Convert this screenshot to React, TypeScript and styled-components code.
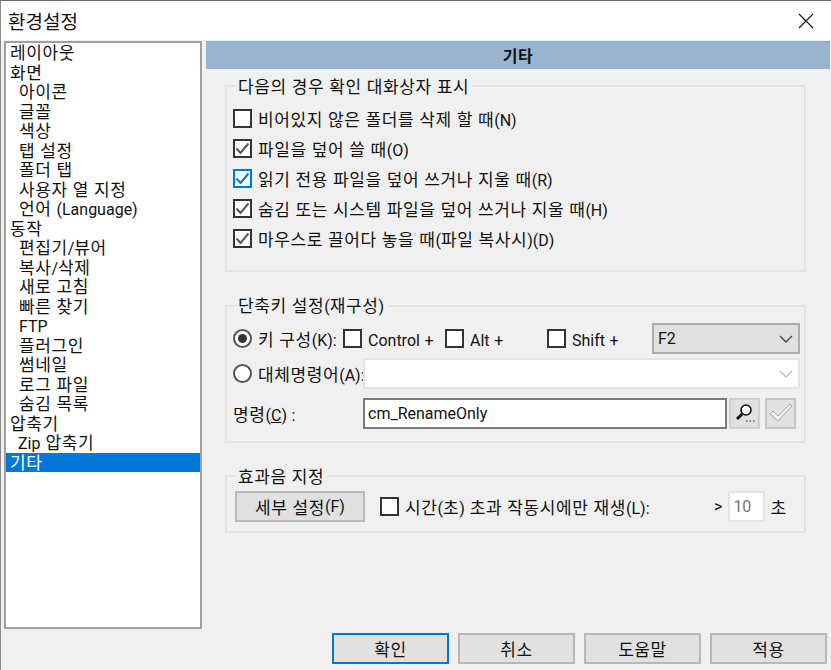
import styled, { createGlobalStyle } from "styled-components";

const GlobalStyle = createGlobalStyle`
  html, body {
    margin: 0;
    padding: 0;
    background: #f0f0f0;
  }
  * {
    box-sizing: border-box;
  }
`;

const Window = styled.div`
  width: 831px;
  height: 670px;
  overflow: hidden;
  display: flex;
  flex-direction: column;
  background: #f0f0f0;
  border-top: 1px solid #6b6b6b;
  border-left: 1px solid #8a8a8a;
  font-family: "Noto Sans CJK KR", sans-serif;
  font-size: 17px;
  color: #111;
  letter-spacing: 0.6px;
  word-spacing: 0.6px;
`;

const Latin = styled.span`
  font-family: Roboto, sans-serif;
  font-size: 16px;
  letter-spacing: 0;
`;

const Underlined = styled(Latin)`
  text-decoration: underline;
`;

// hangul and latin are set at different sizes, like the bitmap-hinted system font
function Txt({ children }: { children: string }) {
  const parts = children.split(/([\uac00-\ud7af ]+)/).filter(Boolean);
  return (
    <>
      {parts.map((part, i) =>
        /[\uac00-\ud7af]/.test(part) ? part : <Latin key={i}>{part}</Latin>
      )}
    </>
  );
}

const TitleBar = styled.div`
  height: 39px;
  flex: none;
  background: #fff;
  display: flex;
  align-items: center;
  justify-content: space-between;
  padding: 0 17px 0 7px;
`;

const Title = styled.div`
  font-size: 19px;
  letter-spacing: 0;
`;

const Body = styled.div`
  flex: none;
  height: 590px;
  display: flex;
  padding: 1px 0 0 3px;
  gap: 4px;
`;

const List = styled.div`
  width: 198px;
  height: 588px;
  flex: none;
  background: #fff;
  border: 2px solid #a0a0a0;
  display: flex;
  flex-direction: column;
`;

const ListItem = styled.div<{ $indent?: number; $selected?: boolean }>`
  height: 19.52px;
  line-height: 18px;
  padding-left: ${({ $indent }) => $indent ?? 4}px;
  background: ${({ $selected }) => ($selected ? "#0078d7" : "transparent")};
  color: ${({ $selected }) => ($selected ? "#fff" : "#111")};
  white-space: nowrap;
`;

const Panel = styled.div`
  width: 624px;
  flex: none;
  display: flex;
  flex-direction: column;
`;

const PanelHeader = styled.div`
  height: 28px;
  flex: none;
  background: #9ab3cf;
  border-top: 1px solid #8fa8c4;
  text-align: center;
  line-height: 27px;
  font-size: 16px;
  font-weight: 700;
  margin-bottom: 7px;
`;

const Group = styled.fieldset<{ $height: number; $gapBelow: number }>`
  margin: 0 24px ${({ $gapBelow }) => $gapBelow}px 19px;
  height: ${({ $height }) => $height}px;
  min-width: 0;
  flex: none;
  padding: 0 0 0 6px;
  border: 2px solid #e3e3e3;
`;

const GroupTitle = styled.legend`
  margin-left: 2px;
  padding: 0 3px;
  line-height: 20px;
  white-space: nowrap;
`;

const CheckList = styled.div`
  display: flex;
  flex-direction: column;
  gap: 8px;
  padding-top: 11px;
`;

const Row = styled.div`
  height: 22px;
  display: flex;
  align-items: center;
  white-space: nowrap;
`;

const CheckBoxFrame = styled.span<{ $accent?: boolean }>`
  width: 19px;
  height: 19px;
  flex: none;
  display: inline-flex;
  align-items: center;
  justify-content: center;
  background: #fff;
  border: 2px solid ${({ $accent }) => ($accent ? "#0078d7" : "#333")};
  margin-right: 6px;
`;

function CheckBox({ checked, accent }: { checked?: boolean; accent?: boolean }) {
  return (
    <CheckBoxFrame $accent={accent}>
      {checked && (
        <svg width="15" height="15" viewBox="0 0 15 15">
          <path
            d="M1.5 7.5 L5.5 12 L13.5 2.5"
            fill="none"
            stroke={accent ? "#0078d7" : "#555"}
            strokeWidth="2"
          />
        </svg>
      )}
    </CheckBoxFrame>
  );
}

const RadioFrame = styled.span`
  width: 19px;
  height: 19px;
  flex: none;
  border-radius: 50%;
  border: 2px solid #555;
  background: #fff;
  margin-right: 6px;
  display: inline-flex;
  align-items: center;
  justify-content: center;
`;

const RadioDot = styled.span`
  width: 9px;
  height: 9px;
  border-radius: 50%;
  background: #333;
`;

const ShortcutRows = styled.div`
  display: flex;
  flex-direction: column;
  padding-top: 5px;
`;

const ShortcutRow = styled.div<{ $height: number }>`
  height: ${({ $height }) => $height}px;
  display: flex;
  align-items: center;
  white-space: nowrap;
`;

const FixedLabel = styled.span<{ $width: number }>`
  width: ${({ $width }) => $width}px;
  flex: none;
  display: inline-block;
`;

const KeySelect = styled.div`
  width: 148px;
  height: 31px;
  flex: none;
  background: #e1e1e1;
  border: 2px solid #adadad;
  display: flex;
  align-items: center;
  justify-content: space-between;
  padding: 0 5px 0 4px;
`;

const Combo = styled.div`
  width: 437px;
  height: 31px;
  flex: none;
  background: #fff;
  border: 2px solid #e3e3e3;
  display: flex;
  align-items: center;
  justify-content: flex-end;
  padding-right: 5px;
`;

const CommandInput = styled.div`
  width: 364px;
  height: 31px;
  flex: none;
  background: #fff;
  border: 2px solid #7a7a7a;
  display: flex;
  align-items: center;
  padding-left: 3px;
`;

const IconButton = styled.div<{ $disabled?: boolean }>`
  width: 31px;
  height: 31px;
  flex: none;
  margin-left: ${({ $disabled }) => ($disabled ? 5 : 2)}px;
  background: #e1e1e1;
  border: 2px solid ${({ $disabled }) => ($disabled ? "#c4c4c4" : "#d0d0d0")};
  display: flex;
  align-items: center;
  justify-content: center;
`;

const SoundRow = styled.div`
  display: flex;
  align-items: center;
  height: 31px;
  margin: 5px 0 0 2px;
  white-space: nowrap;
`;

const PushButton = styled.div<{ $width: number; $primary?: boolean }>`
  width: ${({ $width }) => $width}px;
  height: 31px;
  flex: none;
  background: #e1e1e1;
  border: 2px solid ${({ $primary }) => ($primary ? "#0078d7" : "#b8b8b8")};
  display: flex;
  align-items: center;
  justify-content: center;
  white-space: nowrap;
`;

const SoundCheck = styled.div`
  margin-left: 15px;
  display: flex;
  align-items: center;
  width: 334px;
  flex: none;
`;

const Seconds = styled.div`
  width: 37px;
  height: 31px;
  flex: none;
  margin: 0 5px 0 6px;
  background: #fff;
  border: 2px solid #e3e3e3;
  display: flex;
  align-items: center;
  padding-left: 3px;
  color: #777;
`;

const Footer = styled.div`
  display: flex;
  justify-content: flex-end;
  gap: 9px;
  padding: 3px 4px 0 0;
`;

const menu: { label: string; indent?: number; selected?: boolean }[] = [
  { label: "레이아웃" },
  { label: "화면" },
  { label: "아이콘", indent: 13 },
  { label: "글꼴", indent: 13 },
  { label: "색상", indent: 13 },
  { label: "탭 설정", indent: 13 },
  { label: "폴더 탭", indent: 13 },
  { label: "사용자 열 지정", indent: 13 },
  { label: "언어 (Language)", indent: 13 },
  { label: "동작" },
  { label: "편집기/뷰어", indent: 13 },
  { label: "복사/삭제", indent: 13 },
  { label: "새로 고침", indent: 13 },
  { label: "빠른 찾기", indent: 13 },
  { label: "FTP", indent: 13 },
  { label: "플러그인", indent: 13 },
  { label: "썸네일", indent: 13 },
  { label: "로그 파일", indent: 13 },
  { label: "숨김 목록", indent: 13 },
  { label: "압축기" },
  { label: "Zip 압축기", indent: 12 },
  { label: "기타", selected: true },
];

const confirmations = [
  { label: "비어있지 않은 폴더를 삭제 할 때(N)", checked: false },
  { label: "파일을 덮어 쓸 때(O)", checked: true },
  { label: "읽기 전용 파일을 덮어 쓰거나 지울 때(R)", checked: true, accent: true },
  { label: "숨김 또는 시스템 파일을 덮어 쓰거나 지울 때(H)", checked: true },
  { label: "마우스로 끌어다 놓을 때(파일 복사시)(D)", checked: true },
];

function Chevron({ color }: { color: string }) {
  return (
    <svg width="14" height="8" viewBox="0 0 14 8">
      <path d="M1 1 L7 7 L13 1" fill="none" stroke={color} strokeWidth="1.4" />
    </svg>
  );
}

export default function App() {
  return (
    <Window>
      <GlobalStyle />
      <TitleBar>
        <Title>환경설정</Title>
        <svg width="16" height="16" viewBox="0 0 16 16">
          <path d="M1 1 L15 15 M15 1 L1 15" stroke="#111" strokeWidth="1.1" />
        </svg>
      </TitleBar>
      <Body>
        <List>
          {menu.map((item) => (
            <ListItem key={item.label} $indent={item.indent} $selected={item.selected}>
              <Txt>{item.label}</Txt>
            </ListItem>
          ))}
        </List>
        <Panel>
          <PanelHeader>기타</PanelHeader>
          <Group $height={196} $gapBelow={23}>
            <GroupTitle>다음의 경우 확인 대화상자 표시</GroupTitle>
            <CheckList>
              {confirmations.map((row) => (
                <Row key={row.label}>
                  <CheckBox checked={row.checked} accent={row.accent} />
                  <span>
                    <Txt>{row.label}</Txt>
                  </span>
                </Row>
              ))}
            </CheckList>
          </Group>
          <Group $height={148} $gapBelow={23}>
            <GroupTitle>
              <Txt>단축키 설정(재구성)</Txt>
            </GroupTitle>
            <ShortcutRows>
              <ShortcutRow $height={33}>
                <RadioFrame>
                  <RadioDot />
                </RadioFrame>
                <FixedLabel $width={85}>
                  <Txt>키 구성(K):</Txt>
                </FixedLabel>
                <CheckBox />
                <FixedLabel $width={77}>
                  <Latin>Control +</Latin>
                </FixedLabel>
                <CheckBox />
                <FixedLabel $width={77}>
                  <Latin>Alt +</Latin>
                </FixedLabel>
                <CheckBox />
                <FixedLabel $width={80}>
                  <Latin>Shift +</Latin>
                </FixedLabel>
                <KeySelect>
                  <Latin>F2</Latin>
                  <Chevron color="#444" />
                </KeySelect>
              </ShortcutRow>
              <ShortcutRow $height={37}>
                <RadioFrame />
                <FixedLabel $width={105}>
                  <Txt>대체명령어(A):</Txt>
                </FixedLabel>
                <Combo>
                  <Chevron color="#bbb" />
                </Combo>
              </ShortcutRow>
              <ShortcutRow $height={42}>
                <FixedLabel $width={130}>
                  명령<Latin>(</Latin>
                  <Underlined>C</Underlined>
                  <Latin>) :</Latin>
                </FixedLabel>
                <CommandInput>
                  <Latin>cm_RenameOnly</Latin>
                </CommandInput>
                <IconButton>
                  <svg width="24" height="24" viewBox="0 0 24 24">
                    <circle cx="13" cy="9" r="5" fill="#fff" stroke="#111" strokeWidth="1.6" />
                    <path d="M9 13 L4 18" stroke="#111" strokeWidth="3" />
                    <path d="M13 20h1.5M16.5 20h1.5M20 20h1.5" stroke="#333" strokeWidth="1.2" />
                  </svg>
                </IconButton>
                <IconButton $disabled>
                  <svg width="26" height="24" viewBox="0 0 26 24">
                    <path
                      d="M2 13 L5 10 L10 15 L22 3 L24 5 L10 20 Z"
                      fill="#eee"
                      stroke="#aaa"
                      strokeWidth="1"
                    />
                  </svg>
                </IconButton>
              </ShortcutRow>
            </ShortcutRows>
          </Group>
          <Group $height={67} $gapBelow={0}>
            <GroupTitle>효과음 지정</GroupTitle>
            <SoundRow>
              <PushButton $width={130}>
                <Txt>세부 설정(F)</Txt>
              </PushButton>
              <SoundCheck>
                <CheckBox />
                <span>
                  <Txt>시간(초) 초과 작동시에만 재생(L):</Txt>
                </span>
              </SoundCheck>
              <Latin>&gt;</Latin>
              <Seconds>
                <Latin>10</Latin>
              </Seconds>
              초
            </SoundRow>
          </Group>
        </Panel>
      </Body>
      <Footer>
        <PushButton $width={117} $primary>
          확인
        </PushButton>
        <PushButton $width={117}>취소</PushButton>
        <PushButton $width={117}>도움말</PushButton>
        <PushButton $width={117}>적용</PushButton>
      </Footer>
    </Window>
  );
}
